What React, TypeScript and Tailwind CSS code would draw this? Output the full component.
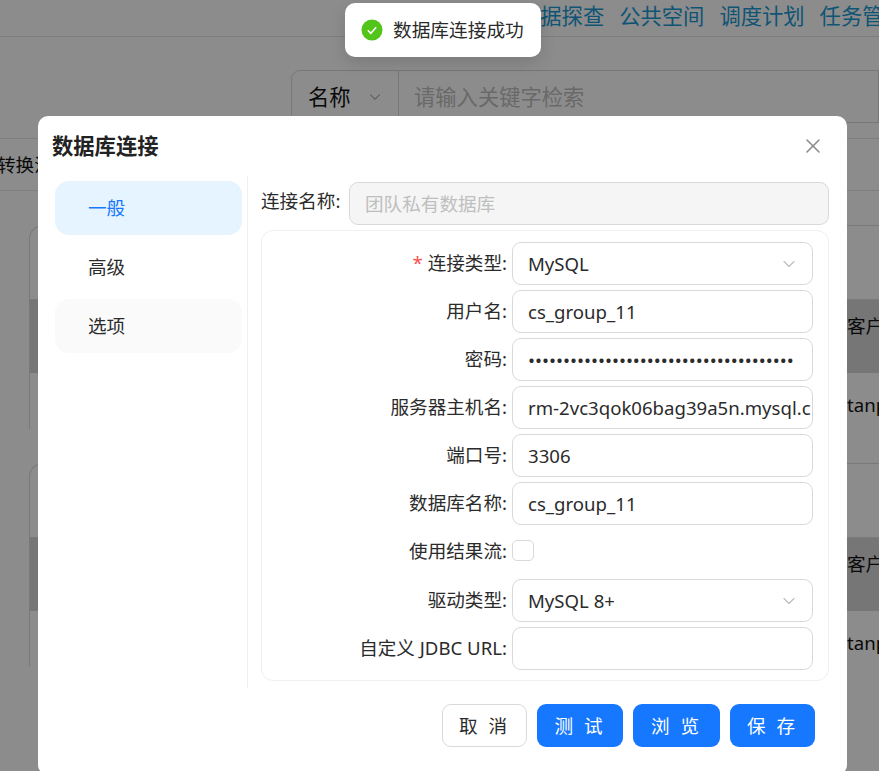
import { ChevronDown, X } from "lucide-react";

const font = "[font-family:'Noto_Sans','Noto_Sans_CJK_SC',sans-serif]";

function Label({ text, required }: { text: string; required?: boolean }) {
  return (
    <div className="w-[250px] shrink-0 flex justify-end pr-[5px] text-[18.6px] leading-[42px] text-[#2b2b2b] whitespace-nowrap">
      {required && <span className="text-[#ff4d4f] mr-[5px]">*</span>}
      {text}:
    </div>
  );
}

function Field({ children }: { children?: React.ReactNode }) {
  return (
    <div className="w-[301px] h-[43px] flex items-center justify-between pl-[15px] pr-[15px] border border-[#d9d9d9] rounded-[9px] text-[18.6px] text-[#2b2b2b] overflow-hidden whitespace-nowrap">
      {children}
    </div>
  );
}

function Row({ label, required, value }: { label: string; required?: boolean; value?: string }) {
  return (
    <div className="flex items-start">
      <Label text={label} required={required} />
      <Field>{value}</Field>
    </div>
  );
}

function SelectRow({ label, required, value }: { label: string; required?: boolean; value: string }) {
  return (
    <div className="flex items-start">
      <Label text={label} required={required} />
      <Field>
        <span>{value}</span>
        <ChevronDown className="w-[20px] h-[20px] mr-[-2px] text-[#bfbfbf] shrink-0" strokeWidth={1.4} />
      </Field>
    </div>
  );
}

function Background() {
  return (
    <div className="h-[771px] overflow-hidden bg-white text-[#111]">
      <div className="h-[37px] border-b border-[#e5e5e5] flex gap-[15px] pl-[519px] text-[21.3px] leading-[31px] text-[#1a9ad6] whitespace-nowrap">
        <span>数据探查</span>
        <span>公共空间</span>
        <span>调度计划</span>
        <span>任务管理</span>
      </div>
      <div className="flex ml-[291px] mt-[33px] h-[53px]">
        <div className="w-[108px] shrink-0 flex items-center justify-between pl-[16px] pr-[14px] border border-[#d9d9d9] rounded-l-[9px] text-[21.3px]">
          <span>名称</span>
          <ChevronDown className="w-[18px] h-[18px] text-[#999]" strokeWidth={1.4} />
        </div>
        <div className="flex-1 flex items-center pl-[15px] border border-l-0 border-[#d9d9d9] text-[21.3px] text-[#bfbfbf]">
          请输入关键字检索
        </div>
      </div>
      <div className="mt-[15px] h-[53px] border-y border-[#e5e5e5] flex items-center pl-0 text-[18.6px] -indent-[3px] whitespace-nowrap">
        转换流程
      </div>
      {[0, 1].map((i) => (
        <div key={i} className="ml-[29px] mt-[34px] mb-[23px] h-[204px] flex flex-col border-l border-t border-[#dcdcdc] rounded-tl-[14px]">
          <div className="h-[74px] border-b border-[#e0e0e0]" />
          <div className="h-[73px] bg-[#d8d8d8]" />
          <div className="flex-1" />
          <div className="absolute left-[847px] mt-[86px] text-[18.6px] whitespace-nowrap">客户行</div>
          <div className="absolute left-[847px] mt-[165px] text-[18.6px] whitespace-nowrap">tanp</div>
        </div>
      ))}
    </div>
  );
}

export default function App() {
  return (
    <div className={`relative w-[879px] h-[771px] overflow-hidden ${font}`}>
      <Background />
      <div className="absolute inset-0 bg-black/45" />

      {/* Toast */}
      <div className="absolute left-[345px] top-[3px] w-[196px] h-[54px] flex items-center gap-[10px] pl-[16px] bg-white rounded-[10px] shadow-[0_6px_16px_rgba(0,0,0,0.12)] text-[18.7px] text-[#2b2b2b]">
        <svg viewBox="0 0 22 22" className="w-[22px] h-[22px] shrink-0">
          <circle cx="11" cy="11" r="10.5" fill="#52c41a" />
          <path d="M6.8 11.3l3 3 5.4-6" fill="none" stroke="#fff" strokeWidth="1.6" />
        </svg>
        数据库连接成功
      </div>

      {/* Dialog */}
      <div className="absolute left-[38px] top-[116px] w-[809px] h-[659px] bg-white rounded-[10px] flex flex-col">
        <div className="h-[60px] shrink-0 flex items-center justify-between pl-[14px] pr-[22px]">
          <span className="text-[21.3px] font-bold text-[#222]">数据库连接</span>
          <X className="w-[24px] h-[24px] text-[#8c8c8c]" strokeWidth={1.6} />
        </div>
        <div className="flex h-[512px]">
          <div className="w-[210px] shrink-0 pl-[17px] pr-[5px] pt-[5px] border-r border-[#f0f0f0] flex flex-col gap-[5px] text-[18.6px] text-[#2b2b2b]">
            <div className="h-[54px] pl-[33px] flex items-center rounded-[14px] bg-[#e6f4ff] text-[#1677ff]">一般</div>
            <div className="h-[54px] pl-[33px] flex items-center rounded-[14px]">高级</div>
            <div className="h-[54px] pl-[33px] flex items-center rounded-[14px] bg-[#fafafa]">选项</div>
          </div>
          <div className="ml-[13px] w-[568px] pt-[6px]">
            <div className="flex items-start">
              <div className="w-[88px] shrink-0 text-[18.6px] leading-[38px] text-[#2b2b2b] whitespace-nowrap">连接名称:</div>
              <div className="w-[480px] h-[43px] flex items-center pl-[15px] border border-[#d9d9d9] rounded-[9px] bg-[#f5f5f5] text-[18.6px] text-[#bfbfbf]">
                团队私有数据库
              </div>
            </div>
            <div className="mt-[5px] h-[451px] w-[568px] border border-[#f0f0f0] rounded-[12px] pt-[11px] flex flex-col gap-[5px]">
              <SelectRow label="连接类型" required value="MySQL" />
              <Row label="用户名" value="cs_group_11" />
              <Row label="密码" value="••••••••••••••••••••••••••••••••••••••" />
              <Row label="服务器主机名" value="rm-2vc3qok06bag39a5n.mysql.c" />
              <Row label="端口号" value="3306" />
              <Row label="数据库名称" value="cs_group_11" />
              <div className="flex items-start h-[44px]">
                <Label text="使用结果流" />
                <div className="w-[22px] h-[21px] mt-[10px] border border-[#d9d9d9] rounded-[5px]" />
              </div>
              <SelectRow label="驱动类型" value="MySQL 8+" />
              <Row label="自定义 JDBC URL" />
            </div>
          </div>
        </div>
        <div className="flex justify-end gap-[10px] pr-[32px] mt-[16px] text-[18.6px] tracking-[3px]">
          <button className="w-[85px] h-[43px] border border-[#d9d9d9] rounded-[9px] text-[#2b2b2b]">取 消</button>
          <button className="w-[86px] h-[43px] rounded-[9px] bg-[#1677ff] text-white">测 试</button>
          <button className="w-[87px] h-[43px] rounded-[9px] bg-[#1677ff] text-white">浏 览</button>
          <button className="w-[85px] h-[43px] rounded-[9px] bg-[#1677ff] text-white">保 存</button>
        </div>
      </div>
    </div>
  );
}
